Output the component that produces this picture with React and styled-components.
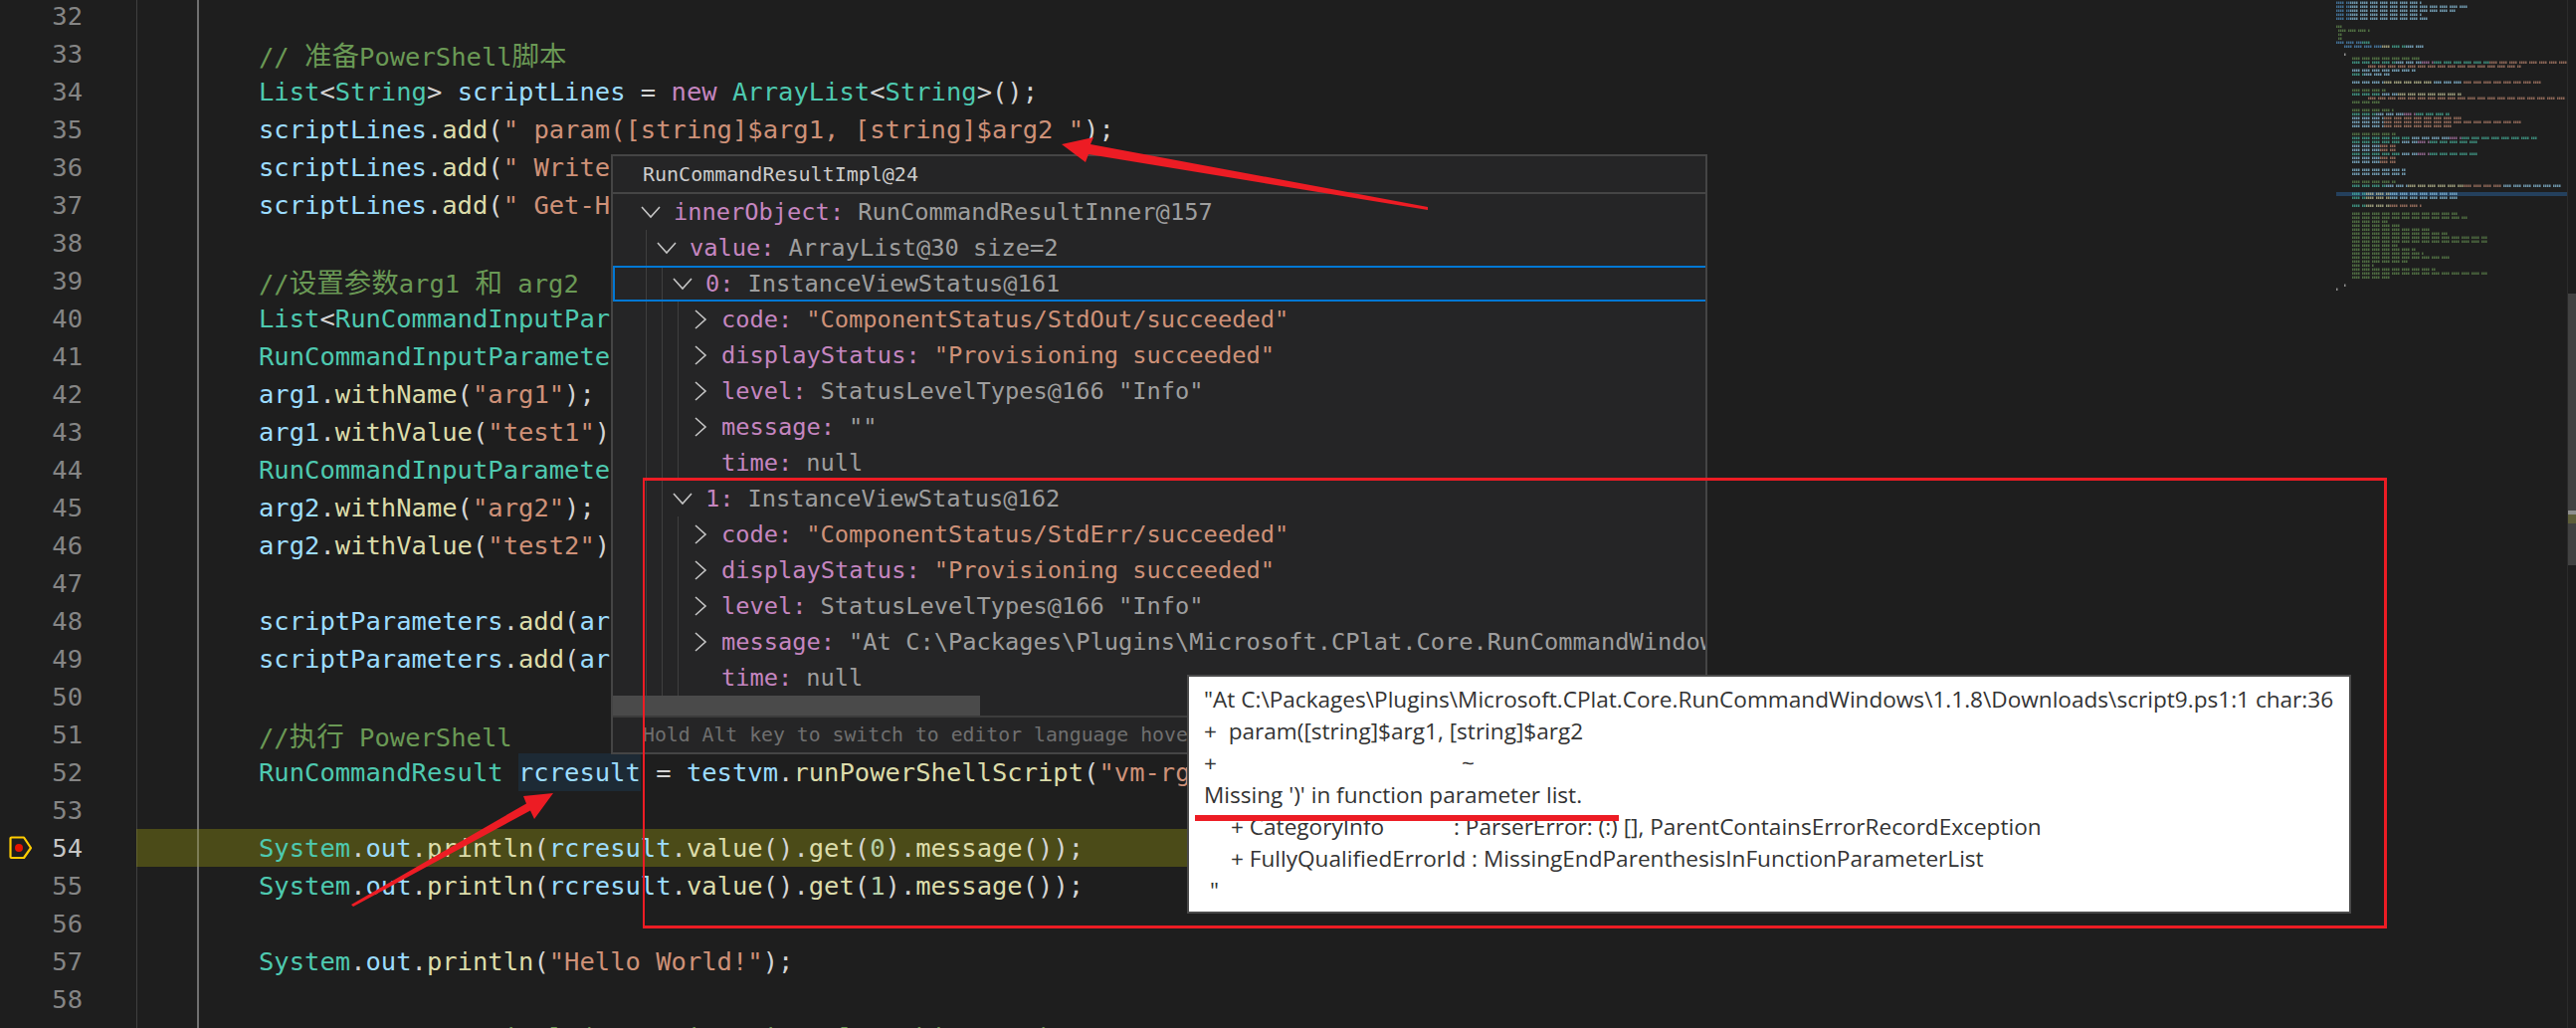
import React from 'react'
import styled, { createGlobalStyle } from 'styled-components'

const COLORS = {
    p: '#d4d4d4',
    v: '#9cdcfe',
    t: '#4ec9b0',
    f: '#dcdcaa',
    s: '#ce9178',
    c: '#6a9955',
    k: '#c586c0',
    n: '#b5cea8',
    b: '#569cd6',
}

const GlobalStyle = createGlobalStyle`
    html, body {
        margin: 0;
        height: 100%;
        background: #1e1e1e;
        overflow: hidden;
    }
`

const Page = styled.div`
    position: relative;
    width: 2589px;
    height: 1033px;
    overflow: hidden;
    background: #1e1e1e;
`

const Editor = styled.div`
    display: flex;
    height: 100%;
`

const CodeColumn = styled.div`
    width: 2348px;
    flex: none;
    margin-top: -3px;
    overflow: hidden;
    font-family: "DejaVu Sans Mono", monospace;
    font-size: 25.5px;
    line-height: 38px;
    white-space: pre;
`

const Row = styled.div`
    display: flex;
    height: 38px;
`

const Glyph = styled.div`
    width: 40px;
    flex: none;
    display: flex;
    align-items: center;
    padding-left: 9px;
    box-sizing: border-box;
`

const LineNumber = styled.div`
    width: 43px;
    flex: none;
    text-align: right;
    color: ${p => (p.$active ? '#c6c6c6' : '#858585')};
`

const CodeArea = styled.div`
    flex: 1;
    min-width: 0;
    margin-left: 54px;
    padding-left: 123px;
    background-color: ${p => (p.$current ? '#4b4b18' : 'transparent')};
    background-image:
        linear-gradient(${p => (p.$current ? '#5f5f30' : '#404040')}, ${p => (p.$current ? '#5f5f30' : '#404040')}),
        linear-gradient(${p => (p.$current ? '#7d7d55' : '#707070')}, ${p => (p.$current ? '#7d7d55' : '#707070')});
    background-size: 1px 100%, 2px 100%;
    background-position: 0 0, 61px 0;
    background-repeat: no-repeat;
`

const Tok = styled.span`
    color: ${p => COLORS[p.$kind]};
`

const Cjk = styled.span`
    color: ${COLORS.c};
    font-family: "Noto Sans CJK SC", sans-serif;
    font-size: 27.5px;
`

const Highlight = styled.span`
    display: inline-block;
    height: 38px;
    background: #1d2a35;
    color: ${COLORS.v};
    vertical-align: top;
`

const MinimapBox = styled.div`
    width: 232px;
    flex: none;
`

const Scrollbar = styled.div`
    width: 9px;
    flex: none;
    box-sizing: border-box;
    border-left: 1px solid #2b2b2b;
`

const ScrollSlider = styled.div`
    height: 273px;
    margin-top: 295px;
    background: #424242;
    padding-top: 218px;
    box-sizing: border-box;
`

const ScrollMark = styled.div`
    height: ${p => p.$size}px;
    background: ${p => p.$color};
`

// hover panel
const HoverPanel = styled.div`
    position: absolute;
    left: 614px;
    top: 155px;
    width: 1102px;
    height: 603px;
    box-sizing: border-box;
    border: 2px solid #454545;
    background: #252526;
    display: flex;
    flex-direction: column;
    font-family: "DejaVu Sans Mono", monospace;
    white-space: pre;
    overflow: hidden;
`

const HoverHeader = styled.div`
    height: 36px;
    flex: none;
    padding-left: 30px;
    border-bottom: 2px solid #454545;
    color: #cccccc;
    font-size: 20px;
    line-height: 36px;
`

const Tree = styled.div`
    flex: none;
    height: 504px;
    overflow: hidden;
`

const guideImage = level =>
    Array.from({ length: level }, () => 'linear-gradient(#3f3f3f, #3f3f3f)').join(', ') || 'none'
const guidePos = level =>
    Array.from({ length: level }, (_, i) => `${33 + i * 16}px 0`).join(', ') || '0 0'

const TreeRow = styled.div`
    display: flex;
    align-items: center;
    height: 36px;
    box-sizing: border-box;
    padding-left: ${p => 28 + p.$level * 16}px;
    font-size: 23.7px;
    background-image: ${p => guideImage(p.$level)};
    background-position: ${p => guidePos(p.$level)};
    background-size: 1px 100%;
    background-repeat: no-repeat;
    ${p => p.$focused && 'box-shadow: inset 2px 0 0 #0078d4, inset 0 2px 0 #0078d4, inset 0 -2px 0 #0078d4;'}
`

const Twistie = styled.span`
    width: 33px;
    flex: none;
    display: flex;
    align-items: center;
    padding-left: ${p => (p.$open ? 0 : 5)}px;
    box-sizing: border-box;
`

const TreeKey = styled.span`
    color: #c586c0;
`

const TreeValue = styled.span`
    color: ${p => (p.$string ? COLORS.s : '#9e9e9e')};
    margin-left: 14px;
`

const HScrollTrack = styled.div`
    height: 20px;
    flex: none;
`

const HScrollThumb = styled.div`
    width: 369px;
    height: 100%;
    background: #4a4a4a;
`

const HoverFooter = styled.div`
    flex: 1;
    padding-left: 30px;
    border-top: 2px solid #3c3c3c;
    color: #6f6f6f;
    font-size: 19.8px;
    line-height: 36px;
`

// annotations pasted on the screenshot
const RedFrame = styled.div`
    position: absolute;
    left: 646px;
    top: 480px;
    width: 1753px;
    height: 453px;
    box-sizing: border-box;
    border: solid #ed1c24;
    border-width: 3px 3px 3px 2px;
`

const ErrorBox = styled.div`
    position: absolute;
    left: 1193px;
    top: 678px;
    width: 1170px;
    height: 240px;
    box-sizing: border-box;
    border: 2px solid #4a4a4a;
    background: #ffffff;
    padding: 7px 0 0 15px;
    color: #333333;
    font-family: "Open Sans", sans-serif;
    font-size: 22.6px;
    line-height: 32px;
    white-space: pre;
`

const ErrorLine = styled.div`
    display: flex;
    height: 32px;
    padding-left: ${p => p.$indent || 0}px;
`

const ErrorLabel = styled.span`
    width: ${p => p.$width}px;
    flex: none;
`

const Underline = styled.div`
    position: absolute;
    left: 6px;
    top: 139px;
    width: 426px;
    height: 6px;
    background: #ed1c24;
`

const ArrowLayer = styled.svg`
    position: absolute;
    left: 0;
    top: 0;
    pointer-events: none;
`

const T = ({ k, children }) => <Tok $kind={k}>{children}</Tok>

const add = (target, text) => (
    <>
        <T k="v">{target}</T><T k="p">.</T><T k="f">add</T><T k="p">(</T>{text}<T k="p">);</T>
    </>
)

const call = (target, fn, text) => (
    <>
        <T k="v">{target}</T><T k="p">.</T><T k="f">{fn}</T><T k="p">(</T><T k="s">{text}</T><T k="p">);</T>
    </>
)

const println = inner => (
    <>
        <T k="t">System</T><T k="p">.</T><T k="v">out</T><T k="p">.</T><T k="f">println</T><T k="p">(</T>{inner}<T k="p">);</T>
    </>
)

const messageOf = n => (
    <>
        <T k="v">rcresult</T><T k="p">.</T><T k="f">value</T><T k="p">().</T><T k="f">get</T><T k="p">(</T><T k="n">{n}</T><T k="p">).</T><T k="f">message</T><T k="p">()</T>
    </>
)

const newParam = name => (
    <>
        <T k="t">RunCommandInputParameter</T><T k="p"> </T><T k="v">{name}</T><T k="p"> = </T><T k="k">new</T><T k="p"> </T><T k="t">RunCommandInputParameter</T><T k="p">();</T>
    </>
)

const LINES = {
    33: <><T k="c">// </T><Cjk>准备</Cjk><T k="c">PowerShell</T><Cjk>脚本</Cjk></>,
    34: <><T k="t">List</T><T k="p">&lt;</T><T k="t">String</T><T k="p">&gt; </T><T k="v">scriptLines</T><T k="p"> = </T><T k="k">new</T><T k="p"> </T><T k="t">ArrayList</T><T k="p">&lt;</T><T k="t">String</T><T k="p">&gt;();</T></>,
    35: add('scriptLines', <T k="s">" param([string]$arg1, [string]$arg2 "</T>),
    36: add('scriptLines', <T k="s">" Write-Host This is a sample script with parameters $arg1 and $arg2"</T>),
    37: add('scriptLines', <T k="s">" Get-Host | Select-Object Version"</T>),
    39: <><T k="c">//</T><Cjk>设置参数</Cjk><T k="c">arg1 </T><Cjk>和</Cjk><T k="c"> arg2</T></>,
    40: <><T k="t">List</T><T k="p">&lt;</T><T k="t">RunCommandInputParameter</T><T k="p">&gt; </T><T k="v">scriptParameters</T><T k="p"> = </T><T k="k">new</T><T k="p"> </T><T k="t">ArrayList</T><T k="p">&lt;</T><T k="t">RunCommandInputParameter</T><T k="p">&gt;();</T></>,
    41: newParam('arg1'),
    42: call('arg1', 'withName', '"arg1"'),
    43: call('arg1', 'withValue', '"test1"'),
    44: newParam('arg2'),
    45: call('arg2', 'withName', '"arg2"'),
    46: call('arg2', 'withValue', '"test2"'),
    48: add('scriptParameters', <T k="v">arg1</T>),
    49: add('scriptParameters', <T k="v">arg2</T>),
    51: <><T k="c">//</T><Cjk>执行</Cjk><T k="c"> PowerShell</T></>,
    52: <><T k="t">RunCommandResult</T><T k="p"> </T><Highlight>rcresult</Highlight><T k="p"> = </T><T k="v">testvm</T><T k="p">.</T><T k="f">runPowerShellScript</T><T k="p">(</T><T k="s">"vm-rg"</T><T k="p">, </T><T k="s">"UpptestVM"</T><T k="p">, </T><T k="v">scriptLines</T><T k="p">, </T><T k="v">scriptParameters</T><T k="p">);</T></>,
    54: println(messageOf(0)),
    55: println(messageOf(1)),
    57: println(<T k="s">"Hello World!"</T>),
    59: <T k="c">// System.out.println("Creating virtual machine...");</T>,
}

const TREE = [
    { level: 0, open: true, name: 'innerObject', value: 'RunCommandResultInner@157' },
    { level: 1, open: true, name: 'value', value: 'ArrayList@30 size=2' },
    { level: 2, open: true, name: '0', value: 'InstanceViewStatus@161', focused: true },
    { level: 3, open: false, name: 'code', value: '"ComponentStatus/StdOut/succeeded"', string: true },
    { level: 3, open: false, name: 'displayStatus', value: '"Provisioning succeeded"', string: true },
    { level: 3, open: false, name: 'level', value: 'StatusLevelTypes@166 "Info"' },
    { level: 3, open: false, name: 'message', value: '""' },
    { level: 3, name: 'time', value: 'null' },
    { level: 2, open: true, name: '1', value: 'InstanceViewStatus@162' },
    { level: 3, open: false, name: 'code', value: '"ComponentStatus/StdErr/succeeded"', string: true },
    { level: 3, open: false, name: 'displayStatus', value: '"Provisioning succeeded"', string: true },
    { level: 3, open: false, name: 'level', value: 'StatusLevelTypes@166 "Info"' },
    { level: 3, open: false, name: 'message', value: '"At C:\\Packages\\Plugins\\Microsoft.CPlat.Core.RunCommandWindows\\1.1.8\\Downloads\\script9.ps1:1 char:36"' },
    { level: 3, name: 'time', value: 'null' },
]

// [indent in chars, [length, colour], ...] one entry per source line
const MINIMAP = [
    [0, [7, 'b'], [36, 'v']],
    [0, [7, 'b'], [59, 'v']],
    [0, [7, 'b'], [53, 'v']],
    [0, [7, 'b'], [36, 'v']],
    [0, [7, 'b'], [40, 'v']],
    [0],
    [0, [3, 'c']],
    [1, [16, 'c']],
    [1, [2, 'c']],
    [1, [2, 'c']],
    [0, [13, 'b'], [5, 't']],
    [4, [19, 'b'], [5, 'f'], [7, 't'], [9, 'v']],
    [0],
    [4, [1, 'p']],
    [8, [35, 'c']],
    [8, [22, 't'], [13, 'v'], [6, 'k'], [28, 't'], [40, 's']],
    [16, [77, 's']],
    [8, [32, 'v']],
    [8, [6, 't'], [13, 'v']],
    [0],
    [8, [16, 'v'], [25, 'f'], [15, 'v'], [40, 's']],
    [0],
    [8, [17, 'c']],
    [8, [15, 't'], [8, 'v'], [32, 'f']],
    [16, [100, 's']],
    [8, [15, 'c']],
    [0],
    [8, [21, 'c']],
    [8, [12, 't'], [14, 'v'], [6, 'k'], [17, 't']],
    [8, [16, 'v'], [39, 's']],
    [8, [16, 'v'], [70, 's']],
    [8, [16, 'v'], [35, 's']],
    [0],
    [8, [22, 'c']],
    [8, [30, 't'], [19, 'v'], [6, 'k'], [38, 't']],
    [8, [25, 't'], [8, 'v'], [6, 'k'], [25, 't']],
    [8, [14, 'v'], [8, 's']],
    [8, [14, 'v'], [8, 's']],
    [8, [25, 't'], [8, 'v'], [6, 'k'], [25, 't']],
    [8, [14, 'v'], [8, 's']],
    [8, [14, 'v'], [8, 's']],
    [0],
    [8, [27, 'v']],
    [8, [27, 'v']],
    [0],
    [8, [22, 'c']],
    [8, [17, 't'], [11, 'v'], [28, 'f'], [20, 's'], [30, 'v']],
    [0],
    [8, [7, 't'], [12, 'f'], [35, 'v']],
    [8, [7, 't'], [12, 'f'], [35, 'v']],
    [0],
    [8, [7, 't'], [12, 'f'], [16, 's']],
    [0],
    [8, [53, 'c']],
    [8, [58, 'c']],
    [8, [18, 'c']],
    [8, [24, 'c']],
    [8, [40, 'c']],
    [8, [48, 'c']],
    [8, [68, 'c']],
    [8, [68, 'c']],
    [8, [23, 'c']],
    [8, [32, 'c']],
    [8, [36, 'c']],
    [8, [50, 'c']],
    [8, [28, 'c']],
    [8, [11, 'c']],
    [8, [42, 'c']],
    [8, [68, 'c']],
    [8, [20, 'c']],
    [0],
    [4, [1, 'p']],
    [0, [1, 'p']],
]

const Minimap = () => (
    <svg width="232" height="300" viewBox="0 0 232 300">
        <defs>
            <filter id="soft" x="-2%" y="-2%" width="104%" height="104%">
                <feGaussianBlur stdDeviation="0.55" />
            </filter>
        </defs>
        <rect x="0" y="193" width="232" height="4" fill="#264f78" opacity="0.7" />
        <g filter="url(#soft)" opacity="0.62">
            {MINIMAP.map(([indent, ...segs], i) => {
                let x = indent * 2
                return segs.map(([len, kind], j) => {
                    const seg = (
                        <line
                            key={`${i}-${j}`}
                            x1={x}
                            x2={x + len * 2}
                            y1={2.7 + i * 4}
                            y2={2.7 + i * 4}
                            stroke={COLORS[kind]}
                            strokeWidth="2.6"
                            strokeDasharray="1.5 0.5 1.5 0.5 1.5 0.5 1.5 2.5"
                        />
                    )
                    x += len * 2
                    return seg
                })
            })}
        </g>
    </svg>
)

const Breakpoint = () => (
    <svg width="24" height="24" viewBox="0 0 24 24">
        <path d="M2.5 1.5h12.5l7 10.5-7 10H2.5a1 1 0 0 1-1-1V2.5a1 1 0 0 1 1-1z" fill="none" stroke="#ffcc00" strokeWidth="2.2" strokeLinejoin="round" />
        <circle cx="10" cy="12" r="4" fill="#e51400" />
    </svg>
)

const ChevronDown = () => (
    <svg width="20" height="14" viewBox="0 0 20 14">
        <path d="M1 2l9 10 9-10" fill="none" stroke="#c5c5c5" strokeWidth="1.6" />
    </svg>
)

const ChevronRight = () => (
    <svg width="14" height="20" viewBox="0 0 14 20">
        <path d="M2 1l10 9-10 9" fill="none" stroke="#c5c5c5" strokeWidth="1.6" />
    </svg>
)

const App = () => {
    const numbers = Array.from({ length: 28 }, (_, i) => 32 + i)

    return (
        <Page>
            <GlobalStyle />
            <Editor>
                <CodeColumn>
                    {numbers.map(n => (
                        <Row key={n}>
                            <Glyph>{n === 54 && <Breakpoint />}</Glyph>
                            <LineNumber $active={n === 54}>{n}</LineNumber>
                            <CodeArea $current={n === 54}>{LINES[n]}</CodeArea>
                        </Row>
                    ))}
                </CodeColumn>
                <MinimapBox>
                    <Minimap />
                </MinimapBox>
                <Scrollbar>
                    <ScrollSlider>
                        <ScrollMark $size={4} $color="#8f8f8f" />
                        <ScrollMark $size={9} $color="#5e5e3a" />
                    </ScrollSlider>
                </Scrollbar>
            </Editor>

            <HoverPanel>
                <HoverHeader>RunCommandResultImpl@24</HoverHeader>
                <Tree>
                    {TREE.map((row, i) => (
                        <TreeRow key={i} $level={row.level} $focused={row.focused}>
                            <Twistie $open={row.open}>
                                {row.open === true && <ChevronDown />}
                                {row.open === false && <ChevronRight />}
                            </Twistie>
                            <TreeKey>{row.name}:</TreeKey>
                            <TreeValue $string={row.string}>{row.value}</TreeValue>
                        </TreeRow>
                    ))}
                </Tree>
                <HScrollTrack>
                    <HScrollThumb />
                </HScrollTrack>
                <HoverFooter>Hold Alt key to switch to editor language hover</HoverFooter>
            </HoverPanel>

            <RedFrame />

            <ErrorBox>
                <ErrorLine>"At C:\Packages\Plugins\Microsoft.CPlat.Core.RunCommandWindows\1.1.8\Downloads\script9.ps1:1 char:36</ErrorLine>
                <ErrorLine>+  param([string]$arg1, [string]$arg2</ErrorLine>
                <ErrorLine><ErrorLabel $width={259}>+</ErrorLabel>~</ErrorLine>
                <ErrorLine>Missing ')' in function parameter list.</ErrorLine>
                <ErrorLine $indent={27}><ErrorLabel $width={224}>+ CategoryInfo</ErrorLabel>: ParserError: (:) [], ParentContainsErrorRecordException</ErrorLine>
                <ErrorLine $indent={27}>+ FullyQualifiedErrorId : MissingEndParenthesisInFunctionParameterList</ErrorLine>
                <ErrorLine $indent={6}>"</ErrorLine>
                <Underline />
            </ErrorBox>

            <ArrowLayer width="2589" height="1033" viewBox="0 0 2589 1033">
                <polygon points="1067,145 1099,138 1096,145 1435,208 1435,211 1094,155 1091,163" fill="#ed1c24" />
                <polygon points="556,797 526,800 529,807.5 353,909 355,911 533,814.5 537,823" fill="#ed1c24" />
            </ArrowLayer>
        </Page>
    )
}

export default App
